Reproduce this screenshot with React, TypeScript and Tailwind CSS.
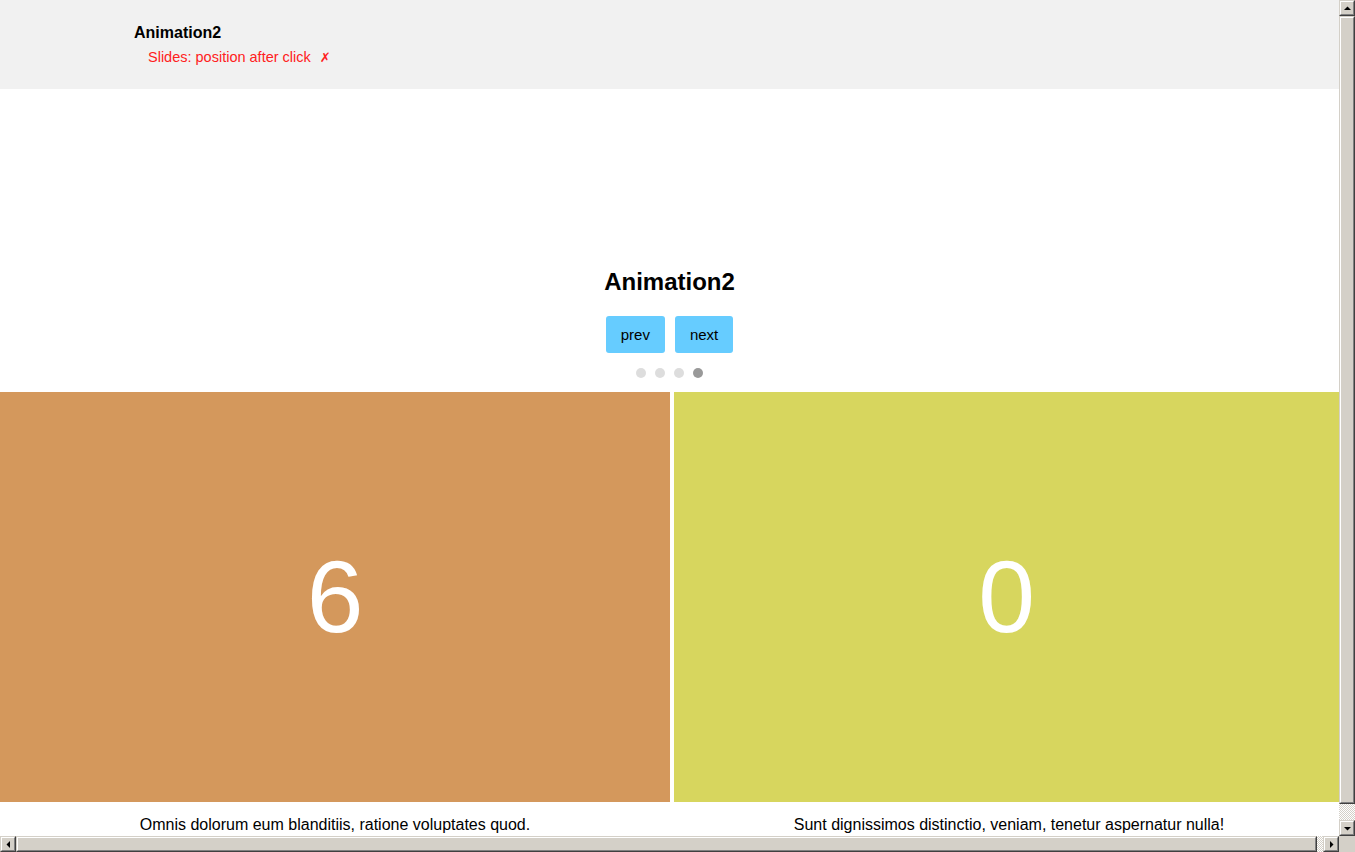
const ArrowBtn = ({ dir }: { dir: "up" | "down" | "left" | "right" }) => {
  const pts = {
    up: "4,9 11,9 7.5,5.5",
    down: "4,6 11,6 7.5,9.5",
    left: "9,4 9,11 5.5,7.5",
    right: "6,4 6,11 9.5,7.5",
  }[dir];
  return (
    <div className="w-[16px] h-[16px] shrink-0 bg-[#d4d0c8] border border-t-[#d4d0c8] border-l-[#d4d0c8] border-r-[#404040] border-b-[#404040]">
      <div className="w-full h-full border border-t-white border-l-white border-r-[#808080] border-b-[#808080]">
        <svg width="14" height="14" viewBox="1 1 14 14" className="block">
          <polygon points={pts} fill="#000" />
        </svg>
      </div>
    </div>
  );
};

const Thumb = ({ className }: { className: string }) => (
  <div className={`bg-[#d4d0c8] border border-t-[#d4d0c8] border-l-[#d4d0c8] border-r-[#404040] border-b-[#404040] ${className}`}>
    <div className="w-full h-full border border-t-white border-l-white border-r-[#808080] border-b-[#808080]" />
  </div>
);

const Track = ({ className }: { className: string }) => (
  <div
    className={`bg-[repeating-conic-gradient(#d4d0c8_0_25%,#ffffff_0_50%)] bg-size-[2px_2px] ${className}`}
  />
);

const Slide = ({ n, color }: { n: string; color: string }) => (
  <div className={`h-[410px] flex items-center justify-center ${color}`}>
    <span className="text-white text-[102px] leading-none">{n}</span>
  </div>
);

export default function App() {
  return (
    <div className="w-[1355px] h-[852px] overflow-hidden flex flex-col font-['Liberation_Sans',Arial,sans-serif] bg-white">
      <div className="flex flex-1 min-h-0">
        <div className="w-[1339px] overflow-hidden">
          <header className="h-[89px] bg-[#f1f1f1] pl-[134px] pt-[24px]">
            <h1 className="text-[16px] leading-[18px] font-bold text-black">Animation2</h1>
            <p className="mt-[7px] ml-[14px] text-[14.5px] leading-[16px] text-[#ff2020]">
              Slides: position after click
              <span className="ml-[9px] font-['DejaVu_Sans',sans-serif] text-[13px]">✗</span>
            </p>
          </header>

          <section className="pt-[179px] flex flex-col items-center">
            <h2 className="text-[24px] leading-[28px] font-bold text-black">Animation2</h2>
            <div className="mt-[20px] flex gap-[10px]">
              <button className="h-[37px] px-[15px] pt-[2px] rounded-[3px] bg-[#66ccff] text-[15px] text-black">prev</button>
              <button className="h-[37px] px-[15px] pt-[2px] rounded-[3px] bg-[#66ccff] text-[15px] text-black">next</button>
            </div>
            <div className="mt-[15px] flex gap-[9px]">
              <span className="w-[10px] h-[10px] rounded-full bg-[#dddddd]" />
              <span className="w-[10px] h-[10px] rounded-full bg-[#dddddd]" />
              <span className="w-[10px] h-[10px] rounded-full bg-[#dddddd]" />
              <span className="w-[10px] h-[10px] rounded-full bg-[#999999]" />
            </div>
          </section>

          <div className="mt-[14px] flex gap-[4px]">
            <div className="w-[670px] shrink-0">
              <Slide n="6" color="bg-[#d4985c]" />
              <p className="mt-[14px] text-center text-[16px] leading-[18px] text-black">
                Omnis dolorum eum blanditiis, ratione voluptates quod.
              </p>
            </div>
            <div className="w-[665px] shrink-0">
              <Slide n="0" color="bg-[#d7d65e]" />
              <p className="mt-[14px] pl-[5px] text-center text-[16px] leading-[18px] text-black">
                Sunt dignissimos distinctio, veniam, tenetur aspernatur nulla!
              </p>
            </div>
          </div>
        </div>

        <div className="w-[16px] flex flex-col bg-[#d4d0c8]">
          <ArrowBtn dir="up" />
          <Thumb className="h-[788px] w-[16px]" />
          <Track className="flex-1" />
          <ArrowBtn dir="down" />
        </div>
      </div>

      <div className="h-[16px] flex shrink-0 bg-[#d4d0c8]">
        <ArrowBtn dir="left" />
        <Thumb className="w-[1301px] h-[16px]" />
        <Track className="flex-1" />
        <ArrowBtn dir="right" />
        <div className="w-[16px] h-[16px] bg-[#d4d0c8]" />
      </div>
    </div>
  );
}
